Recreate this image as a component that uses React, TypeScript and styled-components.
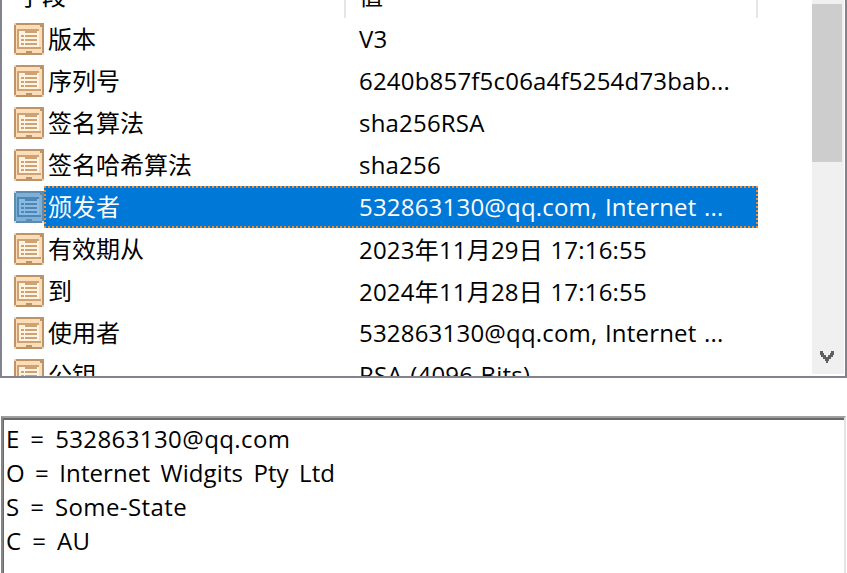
import React from 'react';
import styled, { createGlobalStyle } from 'styled-components';

interface FieldRow {
    name: string,
    value: string,
    selected?: boolean
}

const rows: FieldRow[] = [
    { name: '版本', value: 'V3' },
    { name: '序列号', value: '6240b857f5c06a4f5254d73bab...' },
    { name: '签名算法', value: 'sha256RSA' },
    { name: '签名哈希算法', value: 'sha256' },
    { name: '颁发者', value: '532863130@qq.com, Internet ...', selected: true },
    { name: '有效期从', value: '2023年11月29日 17:16:55' },
    { name: '到', value: '2024年11月28日 17:16:55' },
    { name: '使用者', value: '532863130@qq.com, Internet ...' },
    { name: '公钥', value: 'RSA (4096 Bits)' }
];

const details = [
    { text: 'E = 532863130@qq.com', spacing: 0.4 },
    { text: 'O = Internet Widgits Pty Ltd', spacing: 0.1 },
    { text: 'S = Some-State', spacing: 0.4 },
    { text: 'C = AU', spacing: 0.4 }
];

const GlobalStyle = createGlobalStyle`
    html, body {
        margin: 0;
        padding: 0;
        background: #fff;
        overflow: hidden;
    }
    body {
        width: 847px;
        height: 573px;
        font-family: "Open Sans", "Noto Sans CJK SC", sans-serif;
        font-size: 24px;
        color: #000;
    }
`

const Page = styled.div`
    width: 847px;
    height: 573px;
    overflow: hidden;
    display: flex;
    flex-direction: column;
`

const ListPanel = styled.div`
    height: 378px;
    box-sizing: border-box;
    flex: none;
    display: flex;
    border-left: 2px solid #82838e;
    border-right: 2px solid #82838e;
    border-bottom: 2px solid #82838e;
    overflow: hidden;
`

const ListBody = styled.div`
    width: 810px;
    flex: none;
    overflow: hidden;
`

const HeaderRow = styled.div`
    height: 18px;
    display: flex;
    overflow: hidden;
`

const HeaderCell = styled.div<{ $width: number, $pad: number }>`
    width: ${p => p.$width}px;
    height: 18px;
    box-sizing: border-box;
    flex: none;
    border-right: 2px solid #e5e5e5;
    padding-left: ${p => p.$pad}px;
    display: flex;
    align-items: flex-end;
    line-height: 34px;
    > span {
        display: block;
        height: 34px;
        margin-bottom: 5px;
    }
`

const Row = styled.div`
    height: 42px;
    display: flex;
    align-items: center;
`

const IconSlot = styled.div`
    width: 30px;
    height: 32px;
    margin-left: 12px;
    flex: none;
    svg {
        display: block;
    }
`

const RowContent = styled.div<{ $selected?: boolean }>`
    width: 714px;
    height: 42px;
    box-sizing: border-box;
    padding-bottom: 4px;
    flex: none;
    display: flex;
    align-items: center;
    background: ${p => (p.$selected ? '#0078d7' : 'transparent')};
    color: ${p => (p.$selected ? '#fff' : '#000')};
    outline: ${p => (p.$selected ? '2px dotted #ff8a1f' : 'none')};
    outline-offset: -2px;
`

const NameCell = styled.div`
    width: 315px;
    padding-left: 4px;
    box-sizing: border-box;
    flex: none;
    white-space: nowrap;
`

const ValueCell = styled.div`
    flex: 1;
    margin-top: 2px;
    white-space: nowrap;
    letter-spacing: 0.2px;
    word-spacing: 1px;
`

const ScrollTrack = styled.div`
    width: 32px;
    flex: none;
    margin-bottom: 2px;
    background: #f0f0f0;
    padding-top: 4px;
    display: flex;
    flex-direction: column;
    align-items: flex-start;
    justify-content: space-between;
`

const ScrollThumb = styled.div`
    width: 30px;
    height: 158px;
    background: #cdcdcd;
`

const ScrollArrow = styled.div`
    width: 30px;
    height: 34px;
    display: flex;
    align-items: center;
    justify-content: center;
`

const DetailPanel = styled.div`
    margin: 38px 1px 0 1px;
    flex: 1;
    box-sizing: border-box;
    border-top: 2px solid #a0a0a0;
    border-left: 2px solid #858585;
    border-right: 2px solid #e3e3e3;
`

const DetailInner = styled.div`
    height: 100%;
    box-sizing: border-box;
    border-top: 2px solid #696969;
    border-left: 1px solid #696969;
    padding: 2px 0 0 2px;
`

const DetailLine = styled.div<{ $spacing: number }>`
    height: 34px;
    line-height: 34px;
    white-space: nowrap;
    letter-spacing: ${p => p.$spacing}px;
    word-spacing: 4px;
`

const PropertyIcon: React.FC<{ selected?: boolean }> = ({ selected }) => {
    const edge = selected ? '#5d8cb0' : '#bd9468';
    const fill = selected ? '#7fb0d6' : '#fddcb8';
    const paper = selected ? '#8cbbdf' : '#fff3e4';
    const line = selected ? '#4d86b8' : '#cfa273';
    const corner = selected ? '#c8d8e4' : '#e4d6c4';
    return (
        <svg width="30" height="32" viewBox="0 0 30 32" shapeRendering="crispEdges">
            <rect x="0" y="0" width="30" height="32" fill={edge} />
            <rect x="2" y="2" width="26" height="28" fill={fill} />
            <rect x="0" y="0" width="2" height="2" fill={corner} />
            <rect x="0" y="30" width="2" height="2" fill={corner} />
            <rect x="28" y="30" width="2" height="2" fill={corner} />
            <rect x="26" y="2" width="2" height="2" fill={edge} />
            <rect x="3" y="6" width="22" height="18" fill={line} />
            <rect x="5" y="8" width="20" height="16" fill={paper} />
            <rect x="11" y="8" width="12" height="2" fill={line} />
            <rect x="7" y="12" width="3" height="2" fill={line} />
            <rect x="7" y="16" width="3" height="2" fill={line} />
            <rect x="7" y="20" width="3" height="2" fill={line} />
            <rect x="11" y="12" width="12" height="2" fill={line} />
            <rect x="11" y="16" width="12" height="2" fill={line} />
            <rect x="11" y="20" width="12" height="2" fill={line} />
            <rect x="3" y="24" width="24" height="2" fill={line} />
            <rect x="12" y="28" width="6" height="2" fill={edge} />
        </svg>
    );
}

const App: React.FC = () => {
    return (
        <Page>
            <GlobalStyle />
            <ListPanel>
                <ListBody>
                    <HeaderRow>
                        <HeaderCell $width={344} $pad={16}><span>字段</span></HeaderCell>
                        <HeaderCell $width={412} $pad={13}><span>值</span></HeaderCell>
                    </HeaderRow>
                    {rows.map(row => (
                        <Row key={row.name}>
                            <IconSlot>
                                <PropertyIcon selected={row.selected} />
                            </IconSlot>
                            <RowContent $selected={row.selected}>
                                <NameCell>{row.name}</NameCell>
                                <ValueCell>{row.value}</ValueCell>
                            </RowContent>
                        </Row>
                    ))}
                </ListBody>
                <ScrollTrack>
                    <ScrollThumb />
                    <ScrollArrow>
                        <svg width="14" height="12" viewBox="0 0 14 12" shapeRendering="crispEdges">
                            <path d="M0 0h3v2h1v2h2v2h2V4h2V2h1V0h3v4h-1v2h-2v2h-2v2H8v2H6v-2H5V8H3V6H1V4H0z" fill="#606060" />
                        </svg>
                    </ScrollArrow>
                </ScrollTrack>
            </ListPanel>
            <DetailPanel>
                <DetailInner>
                    {details.map(line => (
                        <DetailLine key={line.text} $spacing={line.spacing}>{line.text}</DetailLine>
                    ))}
                </DetailInner>
            </DetailPanel>
        </Page>
    );
}

export default App;
